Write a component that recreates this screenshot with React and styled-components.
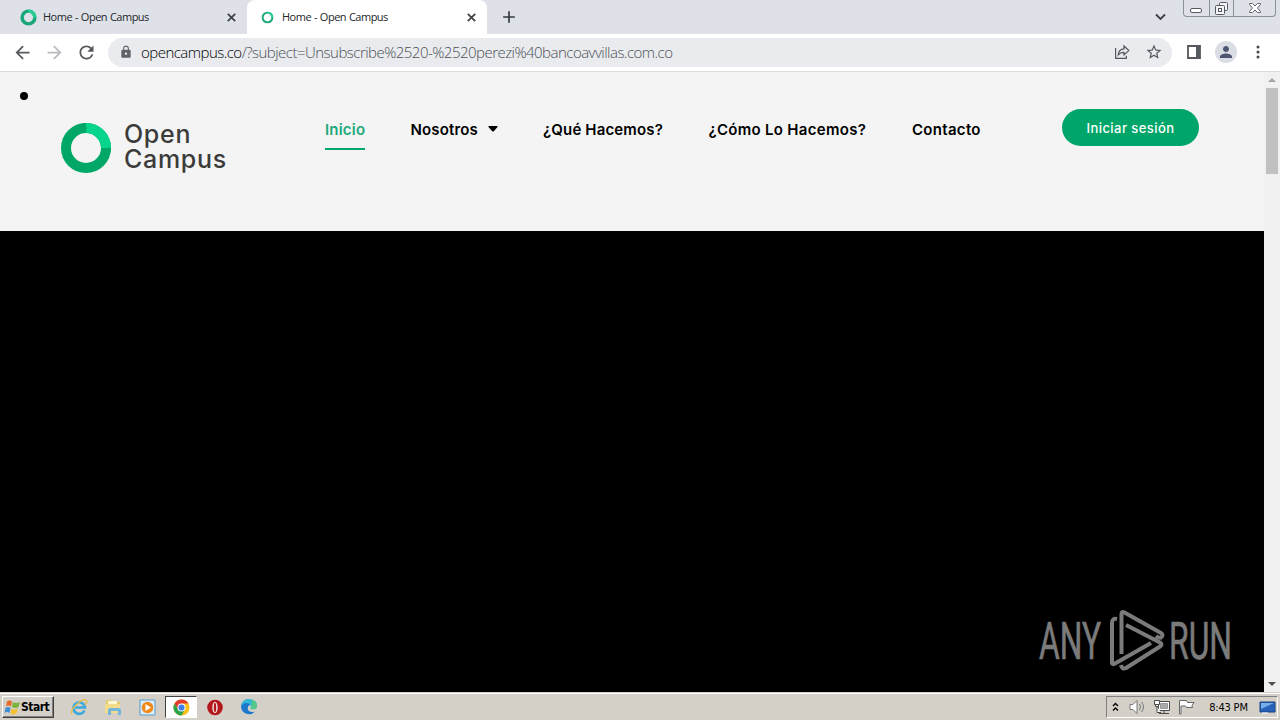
import React from 'react';
import styled, { createGlobalStyle } from 'styled-components';
import { MdAdd, MdArrowBack, MdArrowForward, MdLock, MdPerson, MdRefresh, MdStarBorder } from 'react-icons/md';

const tabs = [
  { id: 1, title: 'Home - Open Campus', active: false, width: 247, ring: 12, stroke: 3 },
  { id: 2, title: 'Home - Open Campus', active: true, width: 240, ring: 8, stroke: 2.2 }
];

const links = [
  { label: 'Inicio', width: 40, spacing: 0.2, active: true },
  { label: 'Nosotros', width: 87, spacing: 0.15, menu: true },
  { label: '¿Qué Hacemos?', width: 120, spacing: 0.15 },
  { label: '¿Cómo Lo Hacemos?', width: 158, spacing: 0.3 },
  { label: 'Contacto', width: 69, spacing: 0.3 }
];

const GlobalStyle = createGlobalStyle`
  * {
    box-sizing: border-box;
  }
  body {
    margin: 0;
    overflow: hidden;
  }
  svg {
    display: block;
    flex: none;
  }
`;

const Screen = styled.div`
  display: flex;
  flex-direction: column;
  width: 1280px;
  height: 720px;
  background: #fff;
  font-family: 'Open Sans', 'Noto Sans', sans-serif;
`;

/* browser chrome */
const TabStrip = styled.div`
  display: flex;
  height: 34px;
  background: #dee1e8;
`;
const Tab = styled.div`
  display: flex;
  align-items: center;
  width: ${({ $width }) => $width}px;
  height: 34px;
  padding: 0 11px 0 ${({ $active }) => ($active ? 12 : 20)}px;
  background: ${({ $active }) => ($active ? '#fff' : 'transparent')};
  border-radius: 8px 8px 0 0;
  color: #3c4043;
`;
const Favicon = styled.div`
  display: flex;
  align-items: center;
  justify-content: center;
  width: 16px;
`;
const TabTitle = styled.span`
  flex: 1;
  margin-left: 7px;
  font-size: 11px;
  line-height: 16px;
  letter-spacing: -0.5px;
  word-spacing: 0.5px;
  color: #24272b;
  white-space: nowrap;
`;
const NewTab = styled.div`
  display: flex;
  align-items: center;
  justify-content: center;
  width: 44px;
  height: 34px;
  color: #35383f;
`;
const TabSearch = styled.div`
  display: flex;
  align-items: center;
  margin-left: auto;
  margin-right: 17px;
`;
const WindowControls = styled.div`
  display: flex;
  width: 93px;
  height: 17px;
  margin-right: 4px;
  border: 1px solid #8b8f98;
  border-top: 0;
  border-radius: 0 0 4px 4px;
`;
const WindowControl = styled.div`
  display: flex;
  align-items: center;
  justify-content: center;
  width: ${({ $width }) => $width}px;
  & + & {
    border-left: 1px solid #8b8f98;
  }
`;

const Toolbar = styled.div`
  display: flex;
  align-items: center;
  height: 38px;
  padding: 0 6px 1px;
  border-bottom: 1px solid #dcdcdc;
`;
const ToolButton = styled.div`
  display: flex;
  align-items: center;
  justify-content: center;
  width: 32px;
  height: 32px;
  color: ${({ $muted }) => ($muted ? '#b9bbbe' : '#55585c')};
`;
const AddressBar = styled.div`
  display: flex;
  align-items: center;
  width: 1064px;
  height: 29px;
  margin: 0 6px;
  padding: 0 2px 0 11px;
  background: #e9ebee;
  border-radius: 15px;
  color: #5f6368;
`;
const Url = styled.span`
  flex: 1;
  margin-left: 8px;
  font-size: 15px;
  font-weight: 300;
  line-height: 20px;
  letter-spacing: -0.52px;
  color: #4c5055;
  white-space: nowrap;
`;
const Host = styled.span`
  color: #000;
`;
const Avatar = styled.div`
  display: flex;
  align-items: center;
  justify-content: center;
  width: 22px;
  height: 22px;
  border-radius: 50%;
  background: #dadde3;
  color: #4c5672;
`;

/* page */
const Content = styled.div`
  display: flex;
  height: 620px;
`;
const Page = styled.div`
  display: flex;
  flex-direction: column;
  width: 1264px;
`;
const Header = styled.header`
  display: flex;
  align-items: flex-start;
  height: 159px;
  background: #f4f4f4;
`;
const Bullet = styled.div`
  width: 8px;
  height: 8px;
  margin: 20px 33px 0 20px;
  border-radius: 50%;
  background: #000;
`;
const Brand = styled.div`
  display: flex;
  width: 264px;
  margin-top: 51px;
`;
const BrandName = styled.div`
  margin: -1px 0 0 13px;
  font-family: Inter, sans-serif;
  font-weight: 550;
  font-size: 25px;
  line-height: 25px;
  letter-spacing: 0.7px;
  color: #3b3b3b;
`;
const Nav = styled.nav`
  display: flex;
  gap: 45.5px;
  margin-top: 46px;
`;
const NavLink = styled.a`
  display: flex;
  align-items: center;
  justify-content: space-between;
  width: ${({ $width }) => $width}px;
  height: 32px;
  padding-bottom: 8px;
  border-bottom: 2px solid ${({ $active }) => ($active ? '#00a76b' : 'transparent')};
  color: ${({ $active }) => ($active ? '#20a87a' : '#000')};
  font-family: Inter, sans-serif;
  font-weight: 600;
  font-size: 15px;
  letter-spacing: ${({ $spacing }) => $spacing}px;
  white-space: nowrap;
`;
const LoginButton = styled.button`
  width: 137px;
  height: 37px;
  margin: 37px 65px 0 auto;
  padding: 0;
  border: 0;
  border-radius: 19px;
  background: #00a669;
  color: #fff;
  font-family: Inter, sans-serif;
  font-weight: 500;
  font-size: 13px;
  letter-spacing: 0.45px;
`;
const Video = styled.div`
  display: flex;
  flex: 1;
  align-items: flex-end;
  justify-content: flex-end;
  padding: 0 30px 18px 0;
  background: #000;
`;
const Scrollbar = styled.div`
  display: flex;
  flex-direction: column;
  align-items: center;
  width: 16px;
  background: #f1f1f1;
`;
const ScrollArrow = styled.div`
  display: flex;
  align-items: center;
  justify-content: center;
  height: 16px;
  margin-top: ${({ $end }) => ($end ? 'auto' : 0)};
`;
const ScrollThumb = styled.div`
  width: 12px;
  height: 86px;
  background: #c1c1c1;
`;

/* taskbar */
const Taskbar = styled.div`
  display: flex;
  height: 28px;
  padding: 2px 2px 0;
  background: #d4d0c8;
  border-top: 1px solid #d4d0c8;
  box-shadow: inset 0 1px #fff;
`;
const StartButton = styled.div`
  display: flex;
  align-items: center;
  width: 52px;
  height: 22px;
  margin-top: 1px;
  padding-left: 1px;
  border: 1px solid;
  border-color: #fff #404040 #404040 #fff;
  box-shadow: inset -1px -1px #808080;
  font-family: 'DejaVu Sans Condensed', 'DejaVu Sans', sans-serif;
  font-weight: bold;
  font-size: 12px;
  letter-spacing: -0.5px;
  color: #000;
`;
const QuickLaunch = styled.div`
  display: flex;
  gap: 2px;
  margin: 1px 0 0 9px;
`;
const LaunchItem = styled.div`
  display: flex;
  align-items: center;
  justify-content: center;
  width: 32px;
  height: 22px;
  background: ${({ $pressed }) => ($pressed ? '#fff' : 'transparent')};
  border: 1px solid;
  border-color: ${({ $pressed }) => ($pressed ? '#404040 #fff #fff #404040' : 'transparent')};
`;
const Tray = styled.div`
  display: flex;
  align-items: center;
  width: 172px;
  height: 22px;
  margin: 1px 0 0 auto;
  padding: 0 1px 0 5px;
  border: 1px solid;
  border-color: #808080 #fff #fff #808080;
`;
const TrayIcons = styled.div`
  display: flex;
  align-items: center;
  gap: 8px;
  margin-left: 10px;
`;
const Clock = styled.span`
  margin: 0 auto;
  font-family: 'DejaVu Sans Condensed', 'DejaVu Sans', sans-serif;
  font-size: 11px;
  letter-spacing: -0.2px;
  padding-left: 3px;
  color: #000;
`;

const Ring = ({ size, stroke }) => (
  <svg width={size + 2} height={size + 2} viewBox="-10 -10 20 20">
    <circle r="7.500" fill="none" stroke="#18a77a" strokeWidth={stroke * 1.35} />
    <path d="M0-7.500A7.500 7.500 0 0 1 7.500 0" fill="none" stroke="#27cf92" strokeWidth={stroke * 1.35} />
  </svg>
);

const Close = () => (
  <svg width="9" height="9" viewBox="0 0 9 9">
    <path d="M.8.8l7.400 7.400M8.200.8L.8 8.200" stroke="#3c4043" strokeWidth="1.700" />
  </svg>
);

const Logo = () => (
  <svg width="50" height="50" viewBox="0 0 50 50">
    <circle cx="25" cy="25" r="20" fill="none" stroke="#00a766" strokeWidth="10" />
    <path d="M25 5A20 20 0 0 1 45 25" fill="none" stroke="#05d68c" strokeWidth="10" />
    <path d="M24 0q2.500 5 .8 10h-3V.2zM40 27q4-3 10-2l-.5 4-9.500 1z" fill="#00a766" />
  </svg>
);

const Share = () => (
  <svg width="16" height="16" viewBox="0 0 16 16" fill="none" stroke="currentColor" strokeWidth="1.200">
    <path d="M1.600 4v10.400h10.800v-2.600" />
    <path d="M4.200 11C4.600 7 6.800 5 10 4.900V2l4.800 4.600L10 11V8.300C7.400 8.300 5.700 9 4.200 11z" />
  </svg>
);

const Watermark = () => (
  <svg width="196" height="66" viewBox="1038 608 196 66">
    <g fill="#7b7b7b" stroke="#7b7b7b" strokeWidth="0.7" fontFamily="Roboto, sans-serif" fontSize="52">
      <text x="1039" y="659" textLength="62" lengthAdjust="spacingAndGlyphs">ANY</text>
      <text x="1169" y="659" textLength="63" lengthAdjust="spacingAndGlyphs">RUN</text>
    </g>
    <g fill="none" stroke="#7b7b7b" strokeWidth="4" strokeLinejoin="round">
      <path d="M1121.500 654V614q0-3 3-1.500L1161 633q3 2 0 4.500-2 1-5-1.500" />
      <path d="M1117 619q-5-1-5 4V663q0 2 3 .5L1151 643" />
      <path d="M1126 625L1160 642.500q3 2 0 4L1126 668q-4 2-5-3" />
    </g>
  </svg>
);

const Flag = () => (
  <svg width="17" height="16" viewBox="0 0 17 16">
    <path d="M3 2.500q2.500-2 5 0l-1 5q-2.500-2-5 0z" fill="#e66b2c" />
    <path d="M9 3q3 2 7 0l-1.500 5q-3 2-6.500 0z" fill="#7bb33c" />
    <path d="M1.500 9q2.500-2 5 0l-1 5q-2.500-2-5 0z" fill="#3f8fd2" />
    <path d="M7.500 9.500q3 2 6.500 0l-1.500 5q-3 2-6 0z" fill="#f4bf32" />
  </svg>
);

const Explorer = () => (
  <svg width="18" height="18" viewBox="0 0 18 18" fill="none">
    <path d="M14.500 12.500A5.800 5.800 0 1 1 15 9.500H5" stroke="#3da9dc" strokeWidth="2.600" />
    <path d="M2 16C-1 12 12 0 16 2q2 1-1 5" stroke="#e9bd45" strokeWidth="1.300" />
  </svg>
);

const Folder = () => (
  <svg width="18" height="18" viewBox="0 0 18 18">
    <path d="M2 2h5l1 2h8v11H2z" fill="#e8c967" />
    <path d="M4 3h9v6H4z" fill="#fff6cf" />
    <path d="M1 6h15v9H1z" fill="#f3dc8b" />
    <path d="M4 17v-5q0-2 2-2h9q2 0 2 2v5h-3v-4H7v4z" fill="#75b7dc" />
  </svg>
);

const Player = () => (
  <svg width="17" height="17" viewBox="0 0 17 17">
    <path d="M1 1h15v15H1z" fill="#d9edfa" stroke="#5a9bcb" />
    <circle cx="8.500" cy="8.500" r="5.800" fill="#f18a1b" />
    <path d="M6.500 5v7l5.500-3.500z" fill="#fff" />
  </svg>
);

const Chrome = () => (
  <svg width="17" height="17" viewBox="-8.500 -8.500 17 17">
    <circle r="8" fill="#fbc116" />
    <path d="M-6.930-4A8 8 0 0 1 6.930-4H0L-3.460 2z" fill="#e33b2e" />
    <path d="M-6.930-4A8 8 0 0 0 0 8L3.460 2H-3.460z" fill="#2da14c" />
    <circle r="4" fill="#fff" />
    <circle r="3.100" fill="#3f7fe8" />
  </svg>
);

const Opera = () => (
  <svg width="17" height="17" viewBox="0 0 17 17">
    <circle cx="8" cy="8.500" r="7.800" fill="#b3161b" />
    <ellipse cx="8" cy="8.500" rx="2.700" ry="5.800" fill="#f4e5e3" />
    <ellipse cx="8" cy="8.500" rx="1.200" ry="4.800" fill="#b3161b" />
  </svg>
);

const Edge = () => (
  <svg width="18" height="18" viewBox="0 0 18 18">
    <path d="M1 9a8 8 0 0 1 8-8q3 2 1 6-3 1-2 5 2 3 7 1.500A8 8 0 0 1 1 9z" fill="#1d78cc" />
    <path d="M1 8.500C2 3.500 5 1 9 1c5 0 8 3 8 6.500S14 12 11 11q-1-1 0-2-1-4-5-4-3 0-5 3.500z" fill="#33b7d6" />
    <path d="M11 1.500q6 2 6 6C17 11 14 12 11 11q-1-1 0-2 2-4 0-7.500z" fill="#55c887" />
  </svg>
);

const Speaker = () => (
  <svg width="17" height="16" viewBox="0 0 17 16" fill="none" stroke="#77777a">
    <path d="M1 5.500h3l4-4v13l-4-4H1z" fill="#fff" />
    <path d="M10.500 5q2 3 0 6M12.500 3q4 5 0 10" />
  </svg>
);

const Network = () => (
  <svg width="16" height="16" viewBox="0 0 16 16" stroke="#4a4a4c">
    <path d="M4.500 2.500h11v9h-11z" fill="#fff" />
    <path d="M6.500 4.500h7v5h-7z" fill="#aaa" stroke="#999" />
    <path d="M5 14.500h10M10 12v2" />
    <path d="M.5 1.500h5v4h-5zM1.500 5.500h3v2h-3zM3 7.500v6h4" fill="#fff" />
  </svg>
);

const ActionFlag = () => (
  <svg width="17" height="16" viewBox="0 0 17 16">
    <path d="M1.500 15V1.500h7l1 2H16l-2 3 .5 2h-6l-1-1.500H3V15z" fill="#fff" stroke="#66666a" />
  </svg>
);

const Desktop = () => (
  <svg width="17" height="15" viewBox="0 0 17 15">
    <path d="M1 2h15v10H1z" fill="#2861b8" stroke="#16407f" />
    <path d="M2 3h13L2 9z" fill="#76aeea" />
    <path d="M3 13h6" stroke="#fff" />
  </svg>
);

const launchers = [
  { name: 'explorer', Icon: Explorer },
  { name: 'files', Icon: Folder },
  { name: 'player', Icon: Player },
  { name: 'chrome', Icon: Chrome, pressed: true },
  { name: 'opera', Icon: Opera },
  { name: 'edge', Icon: Edge }
];

const BrowserTabs = () => (
  <TabStrip>
    {tabs.map(({ id, title, active, width, ring, stroke }) => (
      <Tab key={id} $active={active} $width={width}>
        <Favicon><Ring size={ring + 3} stroke={stroke} /></Favicon>
        <TabTitle>{title}</TabTitle>
        <Close />
      </Tab>
    ))}
    <NewTab><MdAdd size={20} /></NewTab>
    <TabSearch>
      <svg width="11" height="8" viewBox="0 0 11 8">
        <path d="M1 1.500l4.500 4.500L10 1.500" fill="none" stroke="#3c4043" strokeWidth="1.800" />
      </svg>
    </TabSearch>
    <WindowControls>
      <WindowControl $width={25}>
        <svg width="12" height="16" viewBox="0 0 12 16">
          <rect x=".5" y="8.500" width="11" height="4" rx="1.500" fill="#fff" stroke="#555962" />
        </svg>
      </WindowControl>
      <WindowControl $width={25}>
        <svg width="13" height="16" viewBox="0 0 13 16" fill="#f3f4f6" stroke="#555962">
          <rect x="4.500" y="2.500" width="8" height="8" rx="1" />
          <rect x=".5" y="5.500" width="9" height="9" rx="1" />
          <rect x="3.500" y="8.500" width="3" height="3" />
        </svg>
      </WindowControl>
      <WindowControl $width={42}>
        <svg width="12" height="16" viewBox="0 0 12 16">
          <path d="M.5 3.500h3L6 6l2.500-2.500h3v1L8.500 8l3 3.500v1h-3L6 10l-2.500 2.500h-3v-1l3-3.500-3-3.500z" fill="#fff" stroke="#62666f" />
        </svg>
      </WindowControl>
    </WindowControls>
  </TabStrip>
);

const App = () => {
  return (
    <Screen>
      <GlobalStyle />
      <BrowserTabs />
      <Toolbar>
        <ToolButton><MdArrowBack size={21} /></ToolButton>
        <ToolButton $muted><MdArrowForward size={21} /></ToolButton>
        <ToolButton><MdRefresh size={21} /></ToolButton>
        <AddressBar>
          <MdLock size={14} />
          <Url><Host>opencampus.co</Host>/?subject=Unsubscribe%2520-%2520perezi%40bancoavvillas.com.co</Url>
          <ToolButton><Share /></ToolButton>
          <ToolButton><MdStarBorder size={18} /></ToolButton>
        </AddressBar>
        <ToolButton>
          <svg width="14" height="14" viewBox="0 0 14 14">
            <path d="M1 1h12v12H1z" fill="none" stroke="#55585c" strokeWidth="1.800" />
            <path d="M9 1h4v12H9z" fill="#55585c" />
          </svg>
        </ToolButton>
        <ToolButton><Avatar><MdPerson size={18} /></Avatar></ToolButton>
        <ToolButton>
          <svg width="4" height="14" viewBox="0 0 4 14" fill="#45484c">
            <circle cx="2" cy="2" r="1.500" />
            <circle cx="2" cy="7" r="1.500" />
            <circle cx="2" cy="12" r="1.500" />
          </svg>
        </ToolButton>
      </Toolbar>
      <Content>
        <Page>
          <Header>
            <Bullet />
            <Brand>
              <Logo />
              <BrandName>Open<br />Campus</BrandName>
            </Brand>
            <Nav>
              {links.map(({ label, width, spacing, active, menu }) => (
                <NavLink key={label} $width={width} $spacing={spacing} $active={active}>
                  {label}
                  {menu && (
                    <svg width="10" height="6" viewBox="0 0 10 6">
                      <path d="M1 0h8q1 0 .5 1L6 5q-1 1-2 0L.5 1Q0 0 1 0z" />
                    </svg>
                  )}
                </NavLink>
              ))}
            </Nav>
            <LoginButton>Iniciar sesión</LoginButton>
          </Header>
          <Video><Watermark /></Video>
        </Page>
        <Scrollbar>
          <ScrollArrow>
            <svg width="8" height="4" viewBox="0 0 8 4"><path d="M0 4l4-4 4 4z" fill="#a3a3a3" /></svg>
          </ScrollArrow>
          <ScrollThumb />
          <ScrollArrow $end>
            <svg width="8" height="4" viewBox="0 0 8 4"><path d="M0 0l4 4 4-4z" fill="#505050" /></svg>
          </ScrollArrow>
        </Scrollbar>
      </Content>
      <Taskbar>
        <StartButton><Flag />Start</StartButton>
        <QuickLaunch>
          {launchers.map(({ name, Icon, pressed }) => (
            <LaunchItem key={name} $pressed={pressed}><Icon /></LaunchItem>
          ))}
        </QuickLaunch>
        <Tray>
          <svg width="7" height="10" viewBox="0 0 7 10" fill="none" stroke="#000" strokeWidth="1.400">
            <path d="M1 4l2.500-2.500L6 4M1 8.500L3.500 6 6 8.500" />
          </svg>
          <TrayIcons>
            <Speaker />
            <Network />
            <ActionFlag />
          </TrayIcons>
          <Clock>8:43 PM</Clock>
          <Desktop />
        </Tray>
      </Taskbar>
    </Screen>
  );
};

export default App;
